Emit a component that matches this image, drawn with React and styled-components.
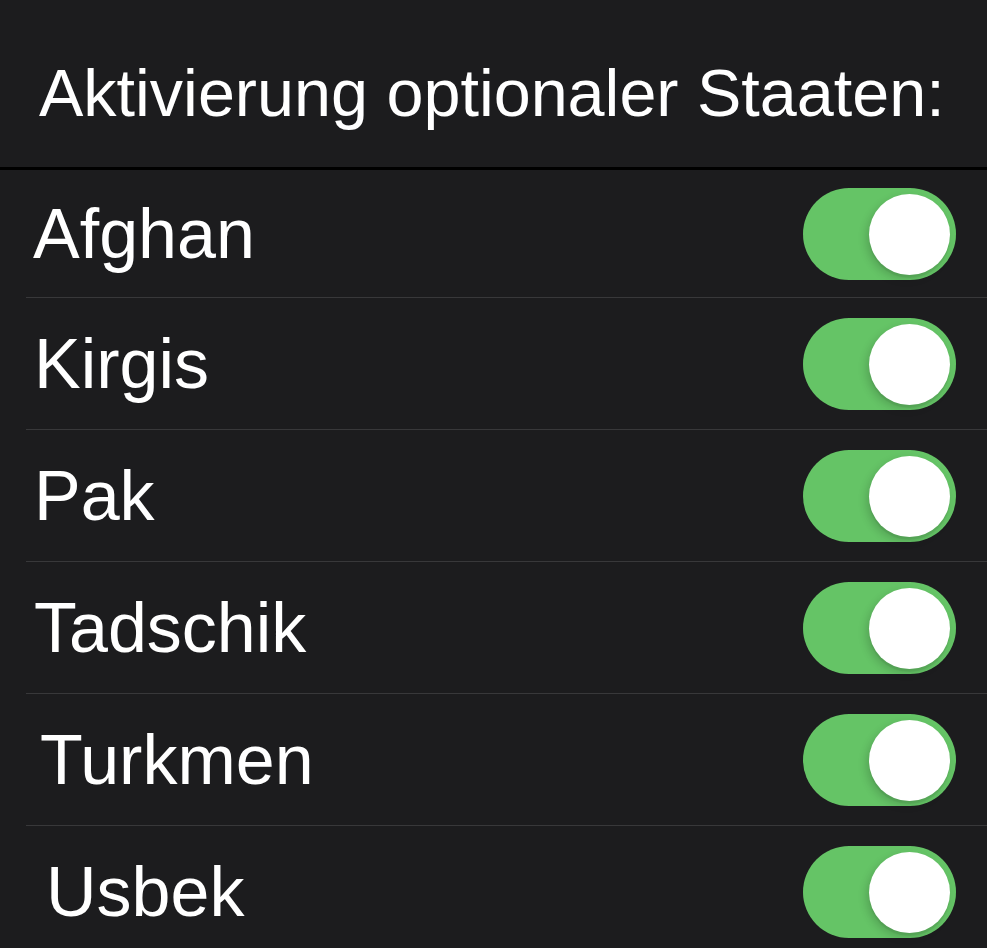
import React from "react";
import styled, { createGlobalStyle } from "styled-components";

const Global = createGlobalStyle`
  html, body {
    margin: 0;
    padding: 0;
    background: #1c1c1e;
    overflow: hidden;
  }
  body {
    font-family: "Liberation Sans", Arial, Helvetica, sans-serif;
    color: #ffffff;
    -webkit-font-smoothing: antialiased;
  }
`;

const Screen = styled.div`
  width: 987px;
  height: 948px;
  background: #1c1c1e;
  display: flex;
  flex-direction: column;
  overflow: hidden;
`;

const Header = styled.header`
  height: 170px;
  box-sizing: border-box;
  padding: 60px 0 0 39px;
  border-bottom: 3px solid #000000;
  flex-shrink: 0;
`;

const Title = styled.h1`
  margin: 0;
  font-size: 66.5px;
  font-weight: 400;
  line-height: 1;
  white-space: nowrap;
  color: #ffffff;
`;

const List = styled.ul`
  list-style: none;
  margin: 0;
  padding: 0 0 0 26px;
  display: flex;
  flex-direction: column;
`;

const Row = styled.li`
  height: 131px;
  flex-shrink: 0;
  display: flex;
  align-items: center;
  justify-content: space-between;
  padding-right: 31px;
  border-top: 1px solid #38383a;

  &:first-child {
    height: 127px;
    border-top: none;
  }
`;

const Label = styled.span`
  font-size: 70px;
  line-height: 1;
  padding-left: ${(p) => 8 + (p.$indent || 0)}px;
  color: #ffffff;
  white-space: nowrap;
`;

const Switch = styled.div`
  position: relative;
  width: 153px;
  height: 92px;
  border-radius: 46px;
  background: ${(p) => (p.$on ? "#65c466" : "#39393d")};
  flex-shrink: 0;
`;

const Knob = styled.div`
  position: absolute;
  top: 6px;
  left: ${(p) => (p.$on ? "66px" : "6px")};
  width: 81px;
  height: 81px;
  border-radius: 50%;
  background: #ffffff;
  box-shadow: -3px 4px 9px rgba(0, 0, 0, 0.16), 0 3px 1px rgba(0, 0, 0, 0.06);
`;

const items = [
  { name: "Afghan", indent: -1 },
  { name: "Kirgis", indent: 0 },
  { name: "Pak", indent: 0 },
  { name: "Tadschik", indent: 0 },
  { name: "Turkmen", indent: 6 },
  { name: "Usbek", indent: 12 },
];

export default function App() {
  return (
    <>
      <Global />
      <Screen>
        <Header>
          <Title>Aktivierung optionaler Staaten:</Title>
        </Header>
        <List>
          {items.map((it) => (
            <Row key={it.name}>
              <Label $indent={it.indent}>{it.name}</Label>
              <Switch $on role="switch" aria-checked="true">
                <Knob $on />
              </Switch>
            </Row>
          ))}
        </List>
      </Screen>
    </>
  );
}
